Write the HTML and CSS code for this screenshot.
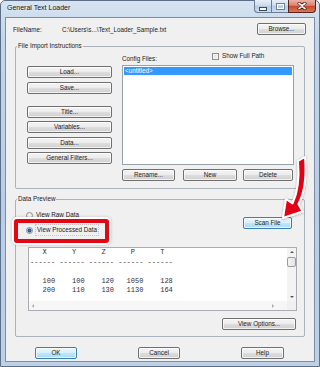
FILE: index.html
```html
<!DOCTYPE html>
<html lang="en">
<head>
    <meta charset="UTF-8">
    <meta name="viewport" content="width=device-width, initial-scale=1.0">
    <link rel="stylesheet" href="styles.css">
    <title>General Text Loader</title>
</head>
<body>
    <div class="window">
        <header class="titlebar">
            <span class="title">General Text Loader</span>
            <div class="caption">
                <span class="cap cap-min">
                    <svg width="8" height="5" viewBox="0 0 8 5"><rect x="0.5" y="1.5" width="7" height="3" fill="#fff" stroke="#3b4a5e" stroke-width="1"/></svg>
                </span>
                <span class="cap cap-max">
                    <svg width="9" height="7" viewBox="0 0 9 7"><rect x="0.5" y="0.5" width="8" height="6" fill="none" stroke="#6f8196" stroke-width="1"/><rect x="1.5" y="1.5" width="6" height="4" fill="none" stroke="#fff" stroke-width="1"/></svg>
                </span>
                <span class="cap cap-close">
                    <svg width="10" height="8" viewBox="0 0 10 8"><path d="M1 0.5 L5 3.2 L9 0.5 M1 7.5 L5 4.8 L9 7.5" stroke="#4a1208" stroke-width="3" fill="none"/><path d="M1.5 1 L5 3.6 L8.5 1 M1.5 7 L5 4.4 L8.5 7" stroke="#fff" stroke-width="1.6" fill="none"/></svg>
                </span>
            </div>
        </header>

        <section class="client">
            <div class="file-row">
                <span class="file-label">FileName:</span>
                <span class="file-path">C:\Users\s...\Text_Loader_Sample.txt</span>
                <button class="btn btn-browse">Browse...</button>
            </div>

            <div class="group group-import">
                <div class="group-title">File Import Instructions</div>
                <div class="import-body">
                    <div class="import-actions">
                        <button class="btn">Load...</button>
                        <button class="btn btn-save">Save...</button>
                        <button class="btn btn-title">Title...</button>
                        <button class="btn btn-vars">Variables...</button>
                        <button class="btn btn-data">Data...</button>
                        <button class="btn btn-filters">General Filters...</button>
                    </div>
                    <div class="config">
                        <div class="config-head">
                            <span class="config-label">Config Files:</span>
                            <label class="check"><span class="check-box"></span>Show Full Path</label>
                        </div>
                        <div class="config-list">
                            <div class="config-item selected">&lt;untitled&gt;</div>
                        </div>
                        <div class="config-buttons">
                            <button class="btn btn-rename">Rename...</button>
                            <button class="btn btn-new">New</button>
                            <button class="btn btn-delete">Delete</button>
                        </div>
                    </div>
                </div>
            </div>

            <div class="group group-preview">
                <div class="group-title">Data Preview</div>
                <div class="preview-top">
                    <div class="radios">
                        <label class="radio"><span class="radio-dot"></span>View Raw Data</label>
                        <label class="radio radio-marked"><span class="radio-dot on"></span><span class="radio-text">View Processed Data</span></label>
                    </div>
                    <button class="btn btn-default btn-scan">Scan File</button>
                </div>
                <div class="preview-box">
<pre class="preview-text">   X      Y      Z      P      T
------ ------ ------ ------ ------

   100    100    120   1050    128
   200    110    130   1130    164</pre>
                    <div class="vscroll">
                        <span class="arrow arrow-up"></span>
                        <span class="thumb"></span>
                        <span class="arrow arrow-down"></span>
                    </div>
                    <div class="hscroll">
                        <span class="arrow arrow-left"></span>
                        <span class="arrow arrow-right"></span>
                    </div>
                    <div class="corner"></div>
                </div>
                <div class="preview-foot">
                    <button class="btn btn-options">View Options...</button>
                </div>
            </div>

            <div class="dialog-buttons">
                <button class="btn btn-default btn-ok">OK</button>
                <button class="btn btn-cancel">Cancel</button>
                <button class="btn btn-help">Help</button>
            </div>
        </section>

        <!-- callout arrow pointing at Scan File -->
        <svg class="callout-arrow" width="320" height="367" viewBox="0 0 320 367">
            <defs>
                <filter id="shade" x="-50%" y="-50%" width="200%" height="200%">
                    <feDropShadow dx="0" dy="0.5" stdDeviation="1" flood-color="#000" flood-opacity="0.35"/>
                </filter>
            </defs>
            <path d="M298 161 L305 157 C306.5 176 305 192 298.5 204 L302.5 211.5 L283 218 L286 199 L292.5 203.5 C297.5 193 299.5 178 298 161 Z" fill="#e30613" stroke="#fff" stroke-width="2" stroke-linejoin="round" filter="url(#shade)"/>
        </svg>
    </div>
</body>
</html>
```

FILE: styles.css
```css
html{
    box-sizing: border-box;
    font-family: "Liberation Sans", Arial, sans-serif;
    font-size: 6.3px;
}
*,
*:before,
*:after{
    box-sizing: inherit;
}
body{
    margin: 0;
    width: 320px;
    height: 367px;
    overflow: hidden;
    background: #fff;
    color: #1b1b1b;
}
.window{
    position: relative;
    width: 320px;
    height: 367px;
    display: flex;
    flex-direction: column;
    padding: 0 4px 4px 4px;
    border: 1px solid #5d6f86;
    border-radius: 5px 5px 0 0;
    background: linear-gradient(#d6e3f1, #c2d5ea 40px, #b9cee6 200px, #bcd1e8);
}
.titlebar{
    height: 16px;
    display: flex;
    align-items: flex-start;
    justify-content: space-between;
    margin: 0 -1px 0 -4px;
    padding-left: 6px;
}
.title{
    font-size: 7px;
    line-height: 14px;
    color: #111;
    text-shadow: 0 0 3px rgba(255,255,255,.9);
}
.caption{
    display: flex;
    margin-top: -1px;
}
.cap{
    height: 13px;
    display: flex;
    align-items: center;
    justify-content: center;
    border: 1px solid #6a7d94;
    border-top: none;
}
.cap-min{
    width: 17px;
    border-right: none;
    border-radius: 0 0 0 4px;
    background: linear-gradient(#e8f0f9, #ccdcee 45%, #b6cbe3 50%, #c9dbef);
}
.cap-min svg{
    margin-top: 4px;
}
.cap-max{
    width: 17px;
    border-right: none;
    background: linear-gradient(#e8f0f9, #ccdcee 45%, #b6cbe3 50%, #c9dbef);
}
.cap-close{
    width: 28px;
    border-color: #5e2219;
    border-radius: 0 0 4px 0;
    background: linear-gradient(#eab2a6, #d88471 45%, #c5472d 50%, #d9775c);
}
.client{
    flex: 1;
    display: flex;
    flex-direction: column;
    border: 1px solid #7c8ea5;
    background: #f0f0f0;
}
.btn{
    display: block;
    height: 12px;
    padding: 0;
    font-family: inherit;
    font-size: 6.3px;
    line-height: 10px;
    color: #1b1b1b;
    text-align: center;
    border: 1px solid #707070;
    border-radius: 2px;
    background: linear-gradient(#f4f4f4, #ececec 48%, #dddddd 52%, #d0d0d0);
    box-shadow: inset 0 0 0 1px rgba(255,255,255,.7);
}
.btn-default{
    border-color: #3c7fb1;
    background: linear-gradient(#eaf6fd, #d9f0fc 48%, #bee6fd 52%, #a9dbf6);
}
.file-row{
    display: flex;
    align-items: center;
    margin-top: 5px;
    padding: 0 8px 0 7px;
}
.file-label{
    width: 49px;
}
.file-path{
    flex: 1;
}
.btn-browse{
    width: 49px;
}
.group{
    border: 1px solid #aab3bc;
    border-radius: 2px;
    margin: 0 9px;
}
.group-import{
    margin-top: 11px;
}
.group-preview{
    margin-top: 10px;
}
.group-title{
    width: fit-content;
    margin: -5px 0 0 1px;
    padding: 0 1px;
    line-height: 8px;
    background: #f0f0f0;
}
.import-body{
    display: flex;
    gap: 10px;
    padding: 0 10px 7px 11px;
}
.import-actions{
    width: 85px;
    display: flex;
    flex-direction: column;
    padding-top: 16px;
}
.btn-save{ margin-top: 4px; }
.btn-title{ margin-top: 12px; }
.btn-vars{ margin-top: 3px; }
.btn-data{ margin-top: 4px; }
.btn-filters{ margin-top: 3px; }
.config{
    width: 172px;
    display: flex;
    flex-direction: column;
}
.config-head{
    height: 15px;
    display: flex;
}
.config-label{
    width: 90px;
    align-self: flex-end;
    line-height: 8px;
    margin-bottom: 2px;
}
.check{
    display: flex;
    align-items: center;
    gap: 3px;
    margin-top: 2px;
    line-height: 8px;
    height: 8px;
}
.check-box{
    width: 7px;
    height: 7px;
    border: 1px solid #8e8f8f;
    background: linear-gradient(135deg, #d9d9d9, #fbfbfb);
    box-shadow: inset 0 0 0 1px #f4f4f4;
}
.config-list{
    height: 100px;
    padding: 1px;
    border: 1px solid #98a0a8;
    background: #fff;
}
.config-item{
    line-height: 8px;
    padding-left: 1px;
}
.config-item.selected{
    background: #3399ff;
    color: #fff;
}
.config-buttons{
    display: flex;
    margin-top: 4px;
}
.btn-rename{ width: 53px; }
.btn-new{ width: 54px; margin-left: 8px; }
.btn-delete{ width: 50px; margin-left: 6px; }
.preview-top{
    display: flex;
    justify-content: space-between;
    padding: 0 12px 0 10px;
}
.radios{
    display: flex;
    flex-direction: column;
    gap: 5px;
    margin-top: 7px;
}
.radio{
    position: relative;
    display: flex;
    align-items: center;
    gap: 3px;
    height: 10px;
    line-height: 10px;
}
.radio-dot{
    width: 7px;
    height: 7px;
    border-radius: 50%;
    border: 1px solid #8e8f8f;
    background: radial-gradient(circle at 50% 40%, #fff, #dcdcdc);
}
.radio-dot.on{
    background: radial-gradient(circle, #2a7fd4 0, #1755a0 1.6px, #e8e8e8 2.4px, #cfcfcf);
}
.radio-text{
    padding: 0 1px;
    outline: 1px dotted rgba(120,120,120,.35);
}
/* red callout frame */
.radio-marked:after{
    content: "";
    position: absolute;
    left: -12px;
    top: -6px;
    width: 95px;
    height: 24px;
    border: 4px solid #e30613;
    border-radius: 3px;
    box-shadow: 0 0 0 2px #fff, 0 0 3px 2px rgba(0,0,0,.2);
}
.btn-scan{
    width: 49px;
    margin-top: 14px;
}
.preview-box{
    height: 64px;
    margin: 12px 7px 0 12px;
    display: grid;
    grid-template-columns: 1fr 9px;
    grid-template-rows: 1fr 9px;
    border: 1px solid #a9adb3;
    background: #fff;
}
.preview-text{
    margin: 0;
    padding-left: 1px;
    overflow: hidden;
    font-family: "Liberation Mono", "Courier New", monospace;
    font-size: 7px;
    line-height: 9.5px;
    color: #2e2e40;
}
.vscroll{
    position: relative;
    display: flex;
    flex-direction: column;
    align-items: center;
    justify-content: space-between;
    padding: 3px 0;
    background: #f3f3f3;
}
.thumb{
    position: absolute;
    top: 9px;
    left: 0;
    width: 9px;
    height: 10px;
    border: 1px solid #9a9a9a;
    border-radius: 2px;
    background: linear-gradient(90deg, #f3f3f3, #e4e4e4);
}
.hscroll{
    display: flex;
    align-items: center;
    justify-content: space-between;
    padding: 0 13px 0 3px;
    background: #f6f6f6;
}
.corner{
    background: #f0f0f0;
}
.arrow{
    width: 0;
    height: 0;
    border: 2px solid transparent;
}
.arrow-up{ border-bottom-color: #555; border-top-width: 0; }
.arrow-down{ border-top-color: #555; border-bottom-width: 0; }
.arrow-left{ border-right-color: #aaa; border-left-width: 0; }
.arrow-right{ border-left-color: #aaa; border-right-width: 0; }
.preview-foot{
    display: flex;
    justify-content: flex-end;
    padding: 7px 8px 6px;
}
.btn-options{
    width: 74px;
}
.dialog-buttons{
    display: flex;
    gap: 61px;
    margin-top: 10px;
    padding-left: 29px;
}
.btn-ok,
.btn-cancel{
    width: 42px;
}
.btn-help{
    width: 43px;
}
.callout-arrow{
    position: absolute;
    left: -1px;
    top: -1px;
    pointer-events: none;
}
```
